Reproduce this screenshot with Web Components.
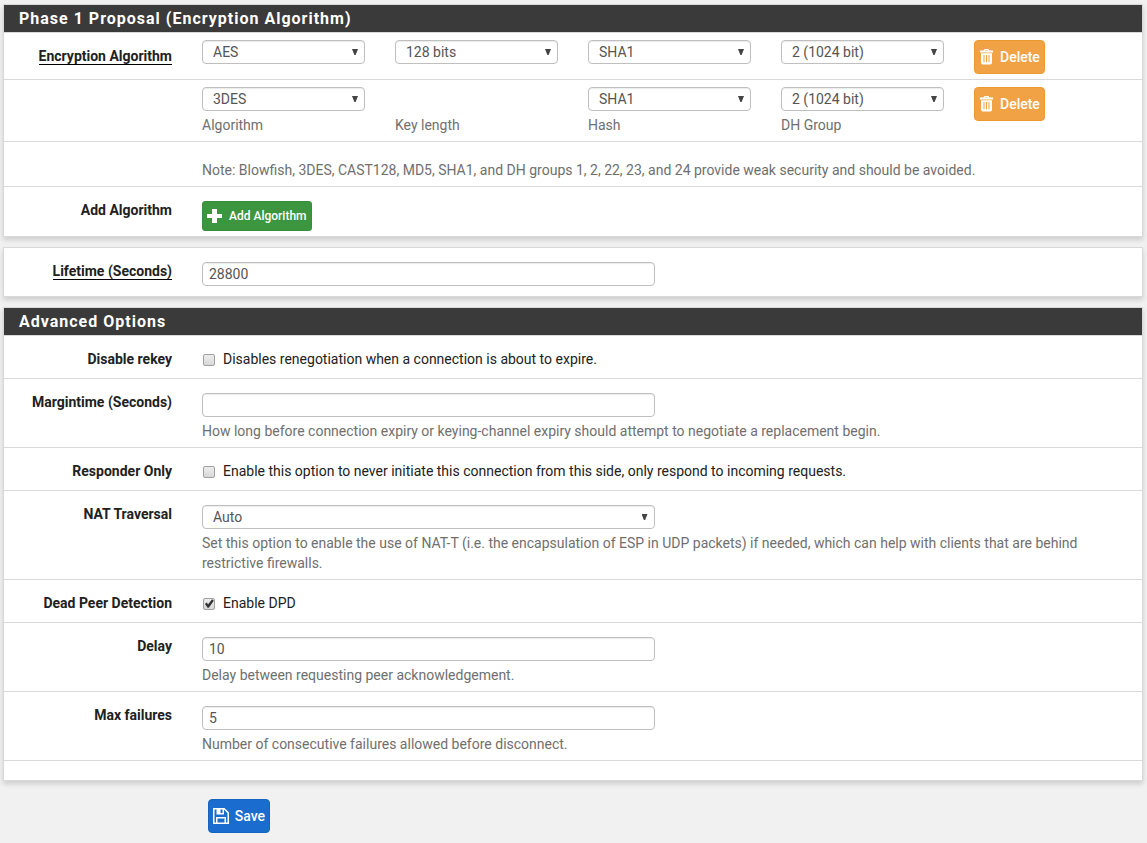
<!DOCTYPE html>
<html lang="en">
<head>
<meta charset="utf-8">
<meta name="viewport" content="width=device-width, initial-scale=1">
<title>Phase 1 Proposal</title>
<style>
  body {
    --text: #212121;
    --control-text: #555;
    --help: #6f6f6f;
    --line: #d9d9d9;
    --heading-bg: #3a3a3a;
    margin: 0;
    padding: 4px;
    background: #f1f1f1;
    color: var(--text);
    font: 14px/20px Roboto, "Liberation Sans", sans-serif;
  }
</style>
</head>
<body>

<form-panel heading="Phase 1 Proposal (Encryption Algorithm)">
  <algorithm-row label="Encryption Algorithm" algorithm="AES" length="128 bits" hash="SHA1" group="2 (1024 bit)"></algorithm-row>
  <algorithm-row algorithm="3DES" hash="SHA1" group="2 (1024 bit)" captions></algorithm-row>
  <note-row>Note: Blowfish, 3DES, CAST128, MD5, SHA1, and DH groups 1, 2, 22, 23, and 24 provide weak security and should be avoided.</note-row>
  <form-row label="Add Algorithm" type="action">
    <icon-button kind="success" icon="plus">Add Algorithm</icon-button>
  </form-row>
</form-panel>

<form-panel>
  <form-row label="Lifetime (Seconds)" type="text" value="28800" required></form-row>
</form-panel>

<form-panel heading="Advanced Options" footer>
  <form-row label="Disable rekey" type="checkbox">Disables renegotiation when a connection is about to expire.</form-row>
  <form-row label="Margintime (Seconds)" type="text">How long before connection expiry or keying-channel expiry should attempt to negotiate a replacement begin.</form-row>
  <form-row label="Responder Only" type="checkbox">Enable this option to never initiate this connection from this side, only respond to incoming requests.</form-row>
  <form-row label="NAT Traversal" type="select" value="Auto">Set this option to enable the use of NAT-T (i.e. the encapsulation of ESP in UDP packets) if needed, which can help with clients that are behind restrictive firewalls.</form-row>
  <form-row label="Dead Peer Detection" type="checkbox" checked>Enable DPD</form-row>
  <form-row label="Delay" type="text" value="10">Delay between requesting peer acknowledgement.</form-row>
  <form-row label="Max failures" type="text" value="5">Number of consecutive failures allowed before disconnect.</form-row>
</form-panel>

<form-actions>
  <icon-button kind="primary" icon="save">Save</icon-button>
</form-actions>

<script>
// twelve column grid shared by every row
const rowStyle = /*css*/ `
  :host {
    display: block;
    border-bottom: 1px solid var(--line);
  }

  :host(:last-child) {
    border-bottom: 0;
  }

  .row {
    display: grid;
    grid-template-columns: repeat(12, minmax(0, 1fr));
    align-items: start;
    margin: 0 -10px;
  }

  .row > * {
    box-sizing: border-box;
    padding: 0 15px;
  }

  .name {
    grid-column: span 2;
    padding-top: 13px;
    text-align: right;
    font-weight: 700;
  }

  .required {
    border-bottom: 1px solid #000;
  }

  .help {
    color: var(--help);
  }
`

const controlStyle = /*css*/ `
  input[type=text], select {
    display: block;
    box-sizing: border-box;
    width: 100%;
    height: 24px;
    margin: 0;
    padding: 0 6px;
    border: 1px solid #bfbfbf;
    border-radius: 4px;
    background: #fff;
    box-shadow: inset 0 1px 1px rgba(0,0,0,.08);
    color: var(--control-text);
    font: inherit;
  }

  select {
    appearance: none;
    padding: 0 20px 0 10px;
  }

  .select {
    position: relative;
  }

  .select::after {
    content: "";
    position: absolute;
    top: 9px;
    right: 7px;
    width: 6px;
    height: 6px;
    background: #444;
    clip-path: polygon(0 0, 100% 0, 60% 100%, 40% 100%);
    pointer-events: none;
  }
`

const icons = {
  trash: `<path fill-rule="evenodd" d="M4.500 1.500 5.100.4Q5.400 0 5.900 0h3.200q.5 0 .8.4l.6 1.100h3.600v2H.9v-2zm1.500 0h3l-.3-.6H6.300zM2 4.200h11v9.600q0 1.700-1.600 1.700H3.600Q2 15.500 2 13.800zM4.500 6v7.300h1V6zM7 6v7.300h1V6zm2.500 0v7.300h1V6z"/>`,
  plus: `<path d="M5 1h5v5h5v4h-5v5H5v-5H0V6h5z"/>`,
  save: `<path fill-rule="evenodd" d="M0 0h11.5L16 4.5V16H0zM1.5 1.5v13H3V9h10v5.500h1.500V5.200L11 1.500V6.500H3.500v-5zm6 0V5H9.500V1.500zM4.500 10.500v4h7v-4z"/>`
}

const selectBox = (id, value, attrs = '') => `
  <div class="select">
    <select id="${id}" ${attrs}><option>${value}</option></select>
  </div>
`

class IconButton extends HTMLElement {
  constructor() {
    super()

    this.attachShadow({ mode: 'open' })
  }

  connectedCallback() {
    const icon = this.getAttribute('icon')
    const width = icon === 'save' ? 16 : 15

    this.shadowRoot.innerHTML = /*html*/ `
      <style>
        :host {
          display: inline-block;
          vertical-align: top;
        }

        button {
          display: flex;
          align-items: center;
          gap: 6px;
          box-sizing: border-box;
          height: 34px;
          margin: 0;
          padding: 0 4px;
          border: 1px solid #1565c0;
          border-radius: 4px;
          background: #1a6cce;
          color: #fff;
          font: 500 14px/20px Roboto, "Liberation Sans", sans-serif;
          white-space: nowrap;
          cursor: pointer;
        }

        svg {
          display: block;
          height: 16px;
          fill: currentColor;
        }

        :host([kind=success]) button {
          height: 30px;
          gap: 7px;
          border-color: #388e3c;
          border-radius: 3px;
          background: #3c963f;
          font-size: 12px;
        }

        :host([kind=warning]) button {
          border-color: #ec9a30;
          background: #f0a245;
        }
      </style>
      <button type="button">
        <svg width="${width}" viewBox="0 0 ${width} 16" aria-hidden="true">${icons[icon]}</svg>
        <span><slot></slot></span>
      </button>
    `
  }
}

class FormPanel extends HTMLElement {
  constructor() {
    super()

    this.attachShadow({ mode: 'open' })
  }

  connectedCallback() {
    const heading = this.getAttribute('heading')

    this.shadowRoot.innerHTML = /*html*/ `
      <style>
        :host {
          display: block;
          margin: 0 0 10px -1px;
          border: 1px solid var(--line);
          background: #fff;
          box-shadow: 0 3px 5px rgba(0,0,0,.15);
        }

        h2 {
          margin: 0;
          padding: 4px 15px 3px;
          border-bottom: 1px solid var(--line);
          background: var(--heading-bg);
          background-clip: padding-box;
          color: #fff;
          font-size: 16px;
          font-weight: 700;
          line-height: 20px;
          letter-spacing: 1px;
        }

        .body {
          overflow: hidden;
        }

        .footer {
          height: 19px;
          border-top: 1px solid var(--line);
        }
      </style>
      ${heading ? `<h2>${heading}</h2>` : ''}
      <div class="body"><slot></slot></div>
      ${this.hasAttribute('footer') ? '<div class="footer"></div>' : ''}
    `
  }
}

class FormRow extends HTMLElement {
  constructor() {
    super()

    this.attachShadow({ mode: 'open' })
  }

  get control() {
    const value = this.getAttribute('value') || ''

    switch (this.getAttribute('type')) {
      case 'checkbox':
        return `
          <label class="check">
            <input id="control" type="checkbox" ${this.hasAttribute('checked') ? 'checked' : ''}>
            <span><slot></slot></span>
          </label>
        `
      case 'action':
        return `<div class="action"><slot></slot></div>`
      case 'select':
        return `<div class="field">${selectBox('control', value)}</div>${this.help}`
      default:
        return `<div class="field"><input id="control" type="text" value="${value}"></div>${this.help}`
    }
  }

  get help() {
    return this.textContent.trim() ? '<div class="help"><slot></slot></div>' : '<div class="space"></div>'
  }

  connectedCallback() {
    const label = this.getAttribute('label')
    const name = this.hasAttribute('required') ? `<span class="required">${label}</span>` : label
    const isAction = this.getAttribute('type') === 'action'

    this.shadowRoot.innerHTML = /*html*/ `
      <style>
        ${rowStyle}
        ${controlStyle}

        .name {
          grid-row: span 2;
        }

        .field {
          grid-column: 3 / span 5;
          padding-top: 14px;
        }

        .help {
          grid-column: 3 / span 10;
          padding-top: 4px;
          padding-bottom: 6px;
        }

        .space {
          grid-column: 3 / span 10;
          height: 10px;
        }

        .action {
          grid-column: 3 / span 10;
          padding-top: 14px;
          padding-bottom: 5px;
        }

        .check {
          grid-column: 3 / span 10;
          display: flex;
          align-items: center;
          gap: 8px;
          padding-top: 13px;
          padding-bottom: 9px;
        }

        input[type=checkbox] {
          appearance: none;
          display: grid;
          flex: none;
          box-sizing: border-box;
          width: 12px;
          height: 12px;
          margin: 1px 0 0 1px;
          border: 1px solid #a0a0a0;
          border-radius: 2px;
          background: linear-gradient(#ededed, #d8d8d8);
        }

        input[type=checkbox]:checked::after {
          content: "";
          width: 10px;
          height: 10px;
          background: #333;
          clip-path: polygon(10% 55%, 25% 40%, 42% 58%, 80% 8%, 98% 22%, 48% 92%, 36% 92%);
        }
      </style>
      <div class="row">
        ${isAction ? `<div class="name">${name}</div>` : `<label class="name" for="control">${name}</label>`}
        ${this.control}
      </div>
    `
  }
}

class AlgorithmRow extends HTMLElement {
  constructor() {
    super()

    this.attachShadow({ mode: 'open' })
  }

  cell(id, caption) {
    const value = this.getAttribute(id)
    const captions = this.hasAttribute('captions')

    return `
      <div class="cell">
        <div class="slot">${value ? selectBox(id, value, captions ? '' : `aria-label="${caption}"`) : ''}</div>
        ${captions ? (value ? `<label class="help" for="${id}">${caption}</label>` : `<span class="help">${caption}</span>`) : ''}
      </div>
    `
  }

  connectedCallback() {
    const label = this.getAttribute('label')

    this.shadowRoot.innerHTML = /*html*/ `
      <style>
        ${rowStyle}
        ${controlStyle}

        .cell {
          grid-column: span 2;
          padding-top: 7px;
          padding-bottom: 5px;
        }

        .slot {
          height: 24px;
        }

        .help {
          display: block;
          padding: 4px 0 1px;
        }
      </style>
      <div class="row">
        <div class="name">${label ? `<span class="required">${label}</span>` : ''}</div>
        ${this.cell('algorithm', 'Algorithm')}
        ${this.cell('length', 'Key length')}
        ${this.cell('hash', 'Hash')}
        ${this.cell('group', 'DH Group')}
        <div class="cell"><icon-button kind="warning" icon="trash">Delete</icon-button></div>
      </div>
    `
  }
}

class NoteRow extends HTMLElement {
  constructor() {
    super()

    this.attachShadow({ mode: 'open' })
    this.shadowRoot.innerHTML = /*html*/ `
      <style>
        ${rowStyle}

        .help {
          grid-column: 3 / span 10;
          padding-top: 18px;
          padding-bottom: 6px;
        }
      </style>
      <div class="row"><div class="help"><slot></slot></div></div>
    `
  }
}

class FormActions extends HTMLElement {
  constructor() {
    super()

    this.attachShadow({ mode: 'open' })
    this.shadowRoot.innerHTML = /*html*/ `
      <style>
        :host {
          display: block;
          padding: 8px 15px 6px calc(100% / 6 + 14px);
        }
      </style>
      <slot></slot>
    `
  }
}

customElements.define('icon-button', IconButton)
customElements.define('form-panel', FormPanel)
customElements.define('form-row', FormRow)
customElements.define('algorithm-row', AlgorithmRow)
customElements.define('note-row', NoteRow)
customElements.define('form-actions', FormActions)
</script>
</body>
</html>
